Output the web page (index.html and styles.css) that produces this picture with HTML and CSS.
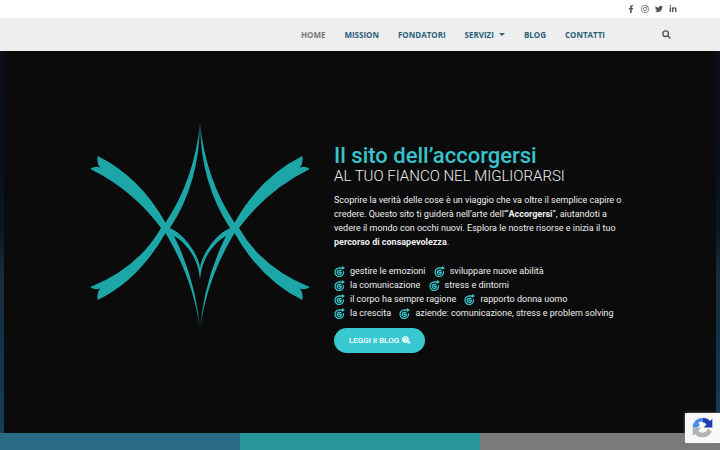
FILE: index.html
```
<!DOCTYPE html>
<html lang="it">

<head>
    <meta charset="utf-8">
    <meta name="viewport" content="width=device-width, initial-scale=1">
    <title>Il sito dell’accorgersi</title>
    <link rel="stylesheet" href="styles.css">
</head>

<body>
    <svg class="sprite" aria-hidden="true">
        <symbol id="spiral" viewBox="0 0 22 22">
            <path d="M19 11.500 A8.500 8.500 0 1 1 10.500 4 H18 M10 12.500 H14.500 A4 4 0 1 1 10.500 8.800 H14" fill="none" stroke="currentColor" stroke-width="2.600" stroke-linecap="round" />
            <path d="M16 0 L22 4 L16 8 Z" fill="currentColor" />
        </symbol>
    </svg>

    <div class="topbar">
        <a href="#" aria-label="Facebook">
            <svg viewBox="0 0 320 512"><path d="M279 288l14-93h-89v-60c0-25 12-50 52-50h41V6s-37-6-72-6c-73 0-121 44-121 125v70H23v93h81v224h100V288z" /></svg>
        </a>
        <a href="#" aria-label="Instagram">
            <svg viewBox="0 0 24 24" class="outline"><rect x="2" y="2" width="20" height="20" rx="6" /><circle cx="12" cy="12" r="5" /><circle cx="18" cy="6" r="1" /></svg>
        </a>
        <a href="#" aria-label="Twitter">
            <svg viewBox="0 0 512 512"><path d="M459 152c0 4 0 9 0 14 0 138-105 298-298 298-59 0-114-17-161-47 8 1 16 1 25 1 49 0 94-16 130-45-46-1-85-31-98-73 6 1 13 2 20 2 9 0 19-1 27-4-48-9-84-52-84-103v-1c14 8 30 13 47 13-28-19-46-51-46-87 0-19 5-37 14-53 52 64 129 105 216 110-2-8-3-16-3-24 0-58 47-105 105-105 30 0 57 13 77 33 24-5 46-13 66-25-8 24-24 45-46 58 21-2 42-8 60-16-14 21-31 39-51 54z" /></svg>
        </a>
        <a href="#" aria-label="LinkedIn">
            <svg viewBox="0 0 448 512"><path d="M100 448H7V149h93zM54 108C24 108 0 83 0 54a54 54 0 0 1 108 0c0 29-24 54-54 54zM448 448h-93V302c0-34-1-79-48-79-49 0-56 38-56 77v148h-93V149h89v41h1c13-24 43-48 88-48 94 0 112 62 112 142z" /></svg>
        </a>
    </div>

    <header class="navbar">
        <nav class="menu">
            <a href="#" class="active">HOME</a>
            <a href="#">MISSION</a>
            <a href="#">FONDATORI</a>
            <a href="#" class="has-sub">SERVIZI</a>
            <a href="#">BLOG</a>
            <a href="#">CONTATTI</a>
        </nav>
        <button class="search" aria-label="Cerca">
            <svg viewBox="0 0 16 16"><circle cx="6.500" cy="6.500" r="5" /><path d="M10.500 10.500 L15 15" /></svg>
        </button>
    </header>

    <main class="hero">
        <section class="panel">
            <svg class="logo" viewBox="0 0 220 212" role="img" aria-label="Logo">
                <defs>
                    <linearGradient id="fade" gradientUnits="userSpaceOnUse" x1="0" y1="0" x2="0" y2="212">
                        <stop offset="0" stop-color="#1ca6a8" stop-opacity="0.500" />
                        <stop offset="0.120" stop-color="#1ca6a8" />
                        <stop offset="0.860" stop-color="#1ca6a8" />
                        <stop offset="1" stop-color="#1ca6a8" stop-opacity="0.400" />
                    </linearGradient>
                    <g id="half">
                        <path d="M7.700 34 Q50 55 75.500 100.700 Q105 56 110 0 Q109.800 61 80 106 Q93 112 103 128 Q109 138 110 146 V157 Q108 137 96 124 Q90 117 84 114 Q107 160 110.300 212 Q105 160 75.500 111 Q49 158 7.700 178 Q6.500 171 10 166.500 Q5 168.500 0.300 165 Q48 146 71 106 Q43 68 0.300 47 Q5 43.500 10 45.500 Q6.500 41 7.700 34 Z" fill="url(#fade)" />
                    </g>
                </defs>
                <use href="#half" />
                <use href="#half" transform="translate(220 0) scale(-1 1)" />
            </svg>

            <div class="intro">
                <h1>Il sito dell’accorgersi</h1>
                <h2>AL TUO FIANCO NEL MIGLIORARSI</h2>
                <p>Scoprire la verità delle cose è un viaggio che va oltre il semplice capire o<br>
                    credere. Questo sito ti guiderà nell’arte dell’“<b>Accorgersi</b>“, aiutandoti a<br>
                    vedere il mondo con occhi nuovi. Esplora le nostre risorse e inizia il tuo<br>
                    <b>percorso di consapevolezza</b>.</p>
                <ul class="topics">
                    <li><svg><use href="#spiral" /></svg>gestire le emozioni <svg><use href="#spiral" /></svg>sviluppare nuove abilità</li>
                    <li><svg><use href="#spiral" /></svg>la comunicazione <svg><use href="#spiral" /></svg>stress e dintorni</li>
                    <li><svg><use href="#spiral" /></svg>il corpo ha sempre ragione <svg><use href="#spiral" /></svg>rapporto donna uomo</li>
                    <li><svg><use href="#spiral" /></svg>la crescita <svg><use href="#spiral" /></svg>aziende: comunicazione, stress e problem solving</li>
                </ul>
                <a href="#" class="blog-btn">LEGGI il BLOG
                    <svg viewBox="0 0 16 16"><circle cx="7" cy="7" r="6.500" fill="#fff" /><path d="M10 10 L15 14 M15 10 V14 H11" stroke="#fff" stroke-width="2" fill="none" /><path d="M4 6 A3 3 0 0 1 10 6 M6 10 L9 7 L11 9" stroke="#38c8cf" stroke-width="1.400" fill="none" /></svg>
                </a>
            </div>
        </section>
    </main>

    <div class="boxes">
        <div class="box blue"></div>
        <div class="box teal"></div>
        <div class="box gray"></div>
    </div>

    <div class="captcha">
        <svg viewBox="0 0 64 64">
            <path d="M32 2 A30 30 0 0 0 2 32 H16 L24 24 L19 18 Q24 14 32 14 Z" fill="#4a8df0" />
            <path d="M32 2 Q46 2 55 12 L62 5 V32 H36 L44 23 Q39 16 32 16 Z" fill="#1c3fae" />
            <path d="M2 32 V59 L9 52 Q18 62 32 62 Q52 61 60 44 L48 36 Q43 48 32 48 Q24 48 19 42 L28 32 Z" fill="#b1b3b6" />
        </svg>
    </div>
</body>

</html>
```
FILE: styles.css
```
* {
    padding: 0;
    margin: 0;
    box-sizing: border-box;
}

body {
    display: flex;
    flex-direction: column;
    min-height: 100vh;
    font-family: Roboto, "Open Sans", sans-serif;
    font-size: 9px;
    background-color: #fff;
}

a {
    color: inherit;
    text-decoration: none;
}

.sprite {
    position: absolute;
    width: 0;
    height: 0;
}

.topbar {
    display: flex;
    justify-content: flex-end;
    align-items: center;
    gap: 6px;
    height: 18px;
    padding-right: 43px;
}

.topbar a,
.topbar svg {
    display: block;
    width: 8px;
    height: 8px;
    fill: #555;
}

.topbar .outline {
    fill: none;
    stroke: #555;
    stroke-width: 2;
}

.navbar {
    display: flex;
    justify-content: flex-end;
    align-items: center;
    gap: 57px;
    height: 33px;
    padding-right: 49px;
    background-color: #eee;
}

.menu {
    display: flex;
    gap: 19px;
    font-family: "Open Sans", sans-serif;
    font-size: 8px;
    font-weight: 700;
    color: #2a6079;
}

.menu .active {
    color: #777;
}

.has-sub::after {
    content: "";
    display: inline-block;
    margin-left: 5px;
    vertical-align: 2px;
    border: 3px solid transparent;
    border-top-color: #2a6079;
    border-bottom: 0;
}

.search {
    width: 9px;
    height: 9px;
    border: none;
    background: none;
    cursor: pointer;
}

.search svg {
    display: block;
    fill: none;
    stroke: #555;
    stroke-width: 2.5;
}

.hero {
    display: flex;
    flex: 1;
    padding: 0 4px;
    background: linear-gradient(#0a0d1c, #0a1420 45%, #1b2d3a 60%, #10344c 80%, #123e59);
}

.panel {
    display: flex;
    flex: 1;
    align-items: center;
    justify-content: center;
    gap: 24px;
    padding: 20px 0;
    background-color: #0b0b0b;
}

.logo {
    width: 220px;
    height: 212px;
    margin-bottom: 29px;
}

.intro {
    width: 296px;
    padding-top: 12px;
    color: #eee;
}

h1 {
    font-size: 22px;
    line-height: 24px;
    font-weight: 500;
    color: #38c3cc;
}

h2 {
    font-size: 15px;
    line-height: 16px;
    font-weight: 300;
    white-space: nowrap;
}

p {
    margin-top: 9px;
    line-height: 14px;
    white-space: nowrap;
}

.topics {
    margin-top: 15px;
    line-height: 14px;
    list-style: none;
    white-space: nowrap;
}

.topics svg {
    width: 11px;
    height: 11px;
    margin-right: 5px;
    vertical-align: -3px;
    color: #38c3cc;
}

.topics svg + svg {
    margin-left: 6px;
}

.blog-btn {
    display: inline-flex;
    align-items: center;
    gap: 3px;
    height: 25px;
    margin-top: 8px;
    padding: 0 15px;
    border-radius: 13px;
    background-color: #38c8cf;
    color: #fff;
    font-size: 8px;
    font-weight: 500;
}

.blog-btn svg {
    width: 8px;
    height: 8px;
}

.boxes {
    display: grid;
    grid-template-columns: repeat(3, 1fr);
}

.box {
    height: 17px;
}

.blue {
    background-color: #296a84;
}

.teal {
    background-color: #26969a;
}

.gray {
    background-color: #7a7a7a;
}

.captcha {
    position: fixed;
    right: 0;
    bottom: 7px;
    width: 35px;
    height: 30px;
    padding: 4px 7px;
    border-radius: 1px 0 0 1px;
    background-color: #f9f9f9;
    box-shadow: 0 0 3px #808080;
}

.captcha svg {
    display: block;
    width: 21px;
    height: 21px;
}
```
